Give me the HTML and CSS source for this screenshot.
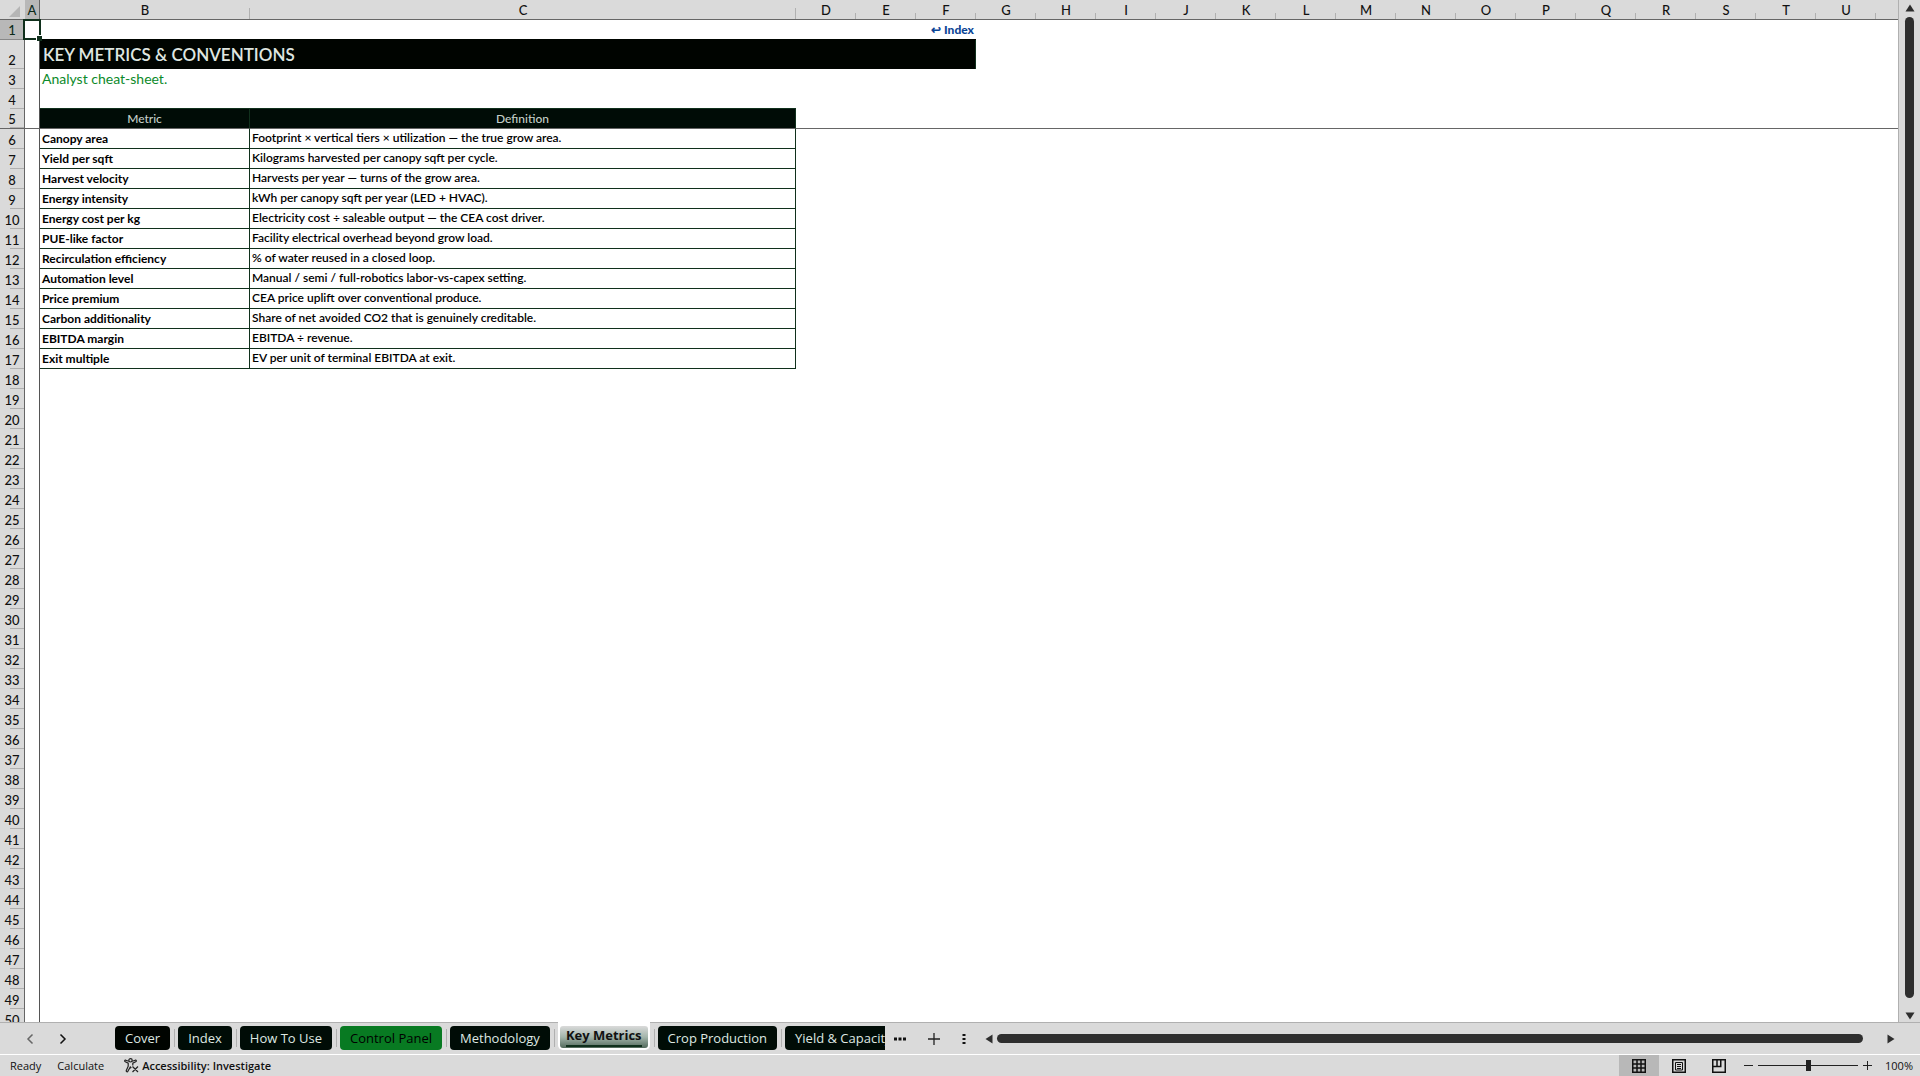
FILE: index.html
```html
<!DOCTYPE html>
<html lang="en">
<head>
<meta charset="utf-8">
<title>Key Metrics</title>
<link rel="stylesheet" href="styles.css">
</head>
<body>
<div class="app">
  <main class="workspace">
    <div class="sheet">
      <table class="grid">
        <colgroup id="cols"><col class="c-row"><col class="c-a"><col class="c-b"><col class="c-c"></colgroup>
        <thead>
          <tr id="letters">
            <th class="corner"><svg width="12" height="12" viewBox="0 0 12 12"><path d="M11 0V11H0Z" fill="#b5b5b5"/></svg></th>
            <th class="current">A</th><th class="wide">B</th><th class="wide">C</th>
          </tr>
        </thead>
        <tbody id="rows">
          <tr><th class="current">1</th><td class="a selected"><span class="cursor"></span></td><td class="above-title"></td><td class="above-title"></td><td class="above-title"></td><td class="above-title"></td><td class="above-title back"><a href="#index">↩ Index</a></td></tr>
          <tr class="title-row"><th>2</th><td class="a"></td><td class="title" colspan="5">KEY METRICS &amp; CONVENTIONS</td></tr>
          <tr><th>3</th><td class="a"></td><td class="note">Analyst cheat-sheet.</td></tr>
          <tr><th>4</th><td class="a"></td><td class="above-head"></td><td class="above-head"></td></tr>
          <tr class="frozen"><th>5</th><td class="a"></td><td class="head">Metric</td><td class="head">Definition</td><td colspan="19"></td></tr>
          <tr><th>6</th><td class="a"></td><td class="metric">Canopy area</td><td class="def">Footprint × vertical tiers × utilization — the true grow area.</td></tr>
          <tr><th>7</th><td class="a"></td><td class="metric">Yield per sqft</td><td class="def">Kilograms harvested per canopy sqft per cycle.</td></tr>
          <tr><th>8</th><td class="a"></td><td class="metric">Harvest velocity</td><td class="def">Harvests per year — turns of the grow area.</td></tr>
          <tr><th>9</th><td class="a"></td><td class="metric">Energy intensity</td><td class="def">kWh per canopy sqft per year (LED + HVAC).</td></tr>
          <tr><th>10</th><td class="a"></td><td class="metric">Energy cost per kg</td><td class="def">Electricity cost ÷ saleable output — the CEA cost driver.</td></tr>
          <tr><th>11</th><td class="a"></td><td class="metric">PUE-like factor</td><td class="def">Facility electrical overhead beyond grow load.</td></tr>
          <tr><th>12</th><td class="a"></td><td class="metric">Recirculation efficiency</td><td class="def">% of water reused in a closed loop.</td></tr>
          <tr><th>13</th><td class="a"></td><td class="metric">Automation level</td><td class="def">Manual / semi / full-robotics labor-vs-capex setting.</td></tr>
          <tr><th>14</th><td class="a"></td><td class="metric">Price premium</td><td class="def">CEA price uplift over conventional produce.</td></tr>
          <tr><th>15</th><td class="a"></td><td class="metric">Carbon additionality</td><td class="def">Share of net avoided CO2 that is genuinely creditable.</td></tr>
          <tr><th>16</th><td class="a"></td><td class="metric">EBITDA margin</td><td class="def">EBITDA ÷ revenue.</td></tr>
          <tr><th>17</th><td class="a"></td><td class="metric">Exit multiple</td><td class="def">EV per unit of terminal EBITDA at exit.</td></tr>
        </tbody>
      </table>
    </div>
    <div class="vscroll">
      <button class="arrow" aria-label="Scroll up"><svg width="10" height="8" viewBox="0 0 10 8"><path d="M5 0.5 9.5 7.5H.5Z"/></svg></button>
      <div class="vthumb"></div>
      <button class="arrow" aria-label="Scroll down"><svg width="10" height="8" viewBox="0 0 10 8"><path d="M.5.5h9L5 7.5Z"/></svg></button>
    </div>
  </main>

  <nav class="tabbar">
    <div class="tabnav">
      <button aria-label="Previous sheet" class="dim"><svg width="8" height="12" viewBox="0 0 8 12"><path d="M6.500 1.500 2 6l4.500 4.500"/></svg></button>
      <button aria-label="Next sheet"><svg width="8" height="12" viewBox="0 0 8 12"><path d="M1.500 1.500 6 6l-4.500 4.500"/></svg></button>
    </div>
    <div class="tabs">
      <button class="tab first">Cover</button>
      <button class="tab">Index</button>
      <button class="tab">How To Use</button>
      <button class="tab green">Control Panel</button>
      <button class="tab">Methodology</button>
      <button class="tab active"><span>Key Metrics</span></button>
      <button class="tab">Crop Production</button>
      <button class="tab last">Yield &amp; Capacity</button>
    </div>
    <div class="tabtools">
      <button aria-label="More sheets"><svg width="12" height="4" viewBox="0 0 12 4"><path d="M0 .5h3v3H0zM4.500.5h3v3h-3zM9 .5h3v3H9z" fill="#111"/></svg></button>
      <button aria-label="New sheet"><svg width="12" height="12" viewBox="0 0 12 12"><path d="M6 0v12M0 6h12" stroke="#222" stroke-width="1.300"/></svg></button>
      <button aria-label="Resize"><svg width="4" height="12" viewBox="0 0 4 12"><path d="M.5 1h3v2h-3zM.5 5h3v2h-3zM.5 9h3v2h-3z" fill="#111"/></svg></button>
    </div>
    <div class="hscroll">
      <button class="arrow" aria-label="Scroll left"><svg width="8" height="10" viewBox="0 0 8 10"><path d="M7.500.5v9L.5 5Z"/></svg></button>
      <div class="hthumb"></div>
      <button class="arrow" aria-label="Scroll right"><svg width="8" height="10" viewBox="0 0 8 10"><path d="M.5.5v9L7.500 5Z"/></svg></button>
    </div>
  </nav>

  <footer class="status">
    <span class="ready">Ready</span>
    <span class="calc">Calculate</span>
    <button class="access"><svg width="15" height="15" viewBox="0 0 15 15" fill="none" stroke="#222" stroke-width="1.200"><circle cx="6.500" cy="2.300" r="1.700"/><path d="M4.800 3.300 1.800 2.200C.6 1.900.3 3.300 1.300 3.800L4.200 5.200V8.200L2.300 12.500C2 13.800 3.400 14.200 3.900 13.200L6.300 9 7.300 10M8.200 3.300l3-1.100c1.200-.3 1.500 1.100.5 1.600L8.800 5.200V7.500M8.500 8.500l5.500 5.500M14 8.500 8.500 14"/></svg>Accessibility: Investigate</button>
    <div class="views">
      <button class="on" aria-label="Normal"><svg width="14" height="14" viewBox="0 0 14 14"><path d="M.75.75h12.500v12.500H.75zM5 .75v12.500M9 .75v12.500M.75 5h12.500M.75 9h12.500"/></svg></button>
      <button aria-label="Page layout"><svg width="14" height="14" viewBox="0 0 14 14"><path d="M.75.75h12.500v12.500H.75z"/><path class="thin" d="M3.500 3.500h7v7.500h-7zM5 5.500h4M5 7.500h4M5 9.500h4"/></svg></button>
      <button aria-label="Page break preview"><svg width="14" height="14" viewBox="0 0 14 14"><path d="M.75.75h12.500v12.500H.75zM.75 7.500h8V.75M5 .75v6.750"/></svg></button>
    </div>
    <div class="zoom">
      <button aria-label="Zoom out"><svg width="9" height="9" viewBox="0 0 9 9"><path d="M0 4.500h9"/></svg></button>
      <input type="range" min="0" max="200" value="100" aria-label="Zoom">
      <button aria-label="Zoom in"><svg width="9" height="9" viewBox="0 0 9 9"><path d="M0 4.500h9M4.500 0v9"/></svg></button>
      <button class="percent">100%</button>
    </div>
  </footer>
</div>
<script src="grid.js"></script>
</body>
</html>
```

FILE: styles.css
```css
* { box-sizing: border-box; }
body { margin: 0; font-family: Lato, "Liberation Sans", sans-serif; color: #000; }
button { border: 0; padding: 0; background: none; font: inherit; color: inherit; }
svg { display: block; }

.app { display: flex; flex-direction: column; height: 100vh; background: #dadada; overflow: hidden; }
.workspace { display: flex; flex: 1; min-height: 0; }
.sheet { flex: 1; min-width: 0; overflow: hidden; background: #fff; border-right: 1px solid #b0b0b0; }

.grid { width: 100%; table-layout: fixed; border-collapse: separate; border-spacing: 0; font-size: 12px; line-height: 18px; }
.c-row { width: 25px; }
.c-a { width: 15px; }
.c-b { width: 210px; }
.c-c { width: 546px; }
.c-std { width: 60px; }
.grid tr { height: 20px; }
.grid .title-row { height: 29px; }
.grid th, .grid td { padding: 0; overflow: hidden; white-space: nowrap; }

.grid th { font-weight: 500; color: #111; }
.grid thead th { height: 20px; padding-top: 2px; font-size: 13px; line-height: 17px; border-bottom: 1px solid #666; background: linear-gradient(#b0b0b0, #b0b0b0) right bottom / 1px 6px no-repeat #dadada; }
.grid thead th.wide { background-size: 1px 11px; }
.grid thead .corner { background: #dadada; }
.corner svg { margin: 2px 0 0 9px; }
.grid tbody th { font-size: 13px; vertical-align: bottom; border-right: 1px solid #666; background: linear-gradient(#b0b0b0, #b0b0b0) right bottom / 14px 1px no-repeat #dadada; }
.grid thead th.current { background: #b8b8b8; border-right: 1px solid #666; color: #0b2a18; }
.grid tbody th.current { background: #b8b8b8; border-bottom: 1px solid #888; color: #0b2a18; }

.a { border-right: 1px solid #555; }
.grid td.selected { position: relative; overflow: visible; }
.cursor { position: absolute; inset: -1px -2px 0 -2px; border: 2px solid #10301c; }
.cursor::after { content: ""; position: absolute; right: -3px; bottom: -3px; width: 5px; height: 5px; background: #10301c; border: solid #fff; border-width: 1px 0 0 1px; }

.above-title { border-bottom: 1px solid #000400; }
.back { text-align: right; font-weight: 900; }
.grid .back { padding-right: 2px; }
.back a { color: #0b4596; text-decoration: none; }
.grid td.title { padding-left: 3px; background: #000400; border-right: 1px solid #10301c; color: #dfe6e0; font-size: 17px; font-weight: 600; line-height: 29px; vertical-align: top; }
.grid td.note { padding-left: 2px; color: #0c8a2a; font-size: 14px; line-height: 20px; overflow: visible; }
.above-head { border-bottom: 1px solid #10301c; }
.frozen td, .frozen th { border-bottom: 1px solid #666; }
.grid .head { background: #000c06; color: #c4cfc8; text-align: center; font-weight: 500; border-right: 1px solid #10301c; }
.grid .metric, .grid .def { padding-left: 2px; border-right: 1px solid #10301c; border-bottom: 1px solid #10301c; }
.metric { font-weight: 700; vertical-align: bottom; }
.def { vertical-align: top; font-weight: 600; }

.vscroll { width: 21px; display: flex; flex-direction: column; align-items: center; gap: 5px; padding: 4px 0 2px; }
.vthumb { flex: 1; width: 9px; border-radius: 5px; background: #2e2e2e; margin-bottom: 9px; }
.arrow { fill: #2e2e2e; }

.tabbar { display: flex; height: 32px; font-family: "Open Sans", "Noto Sans", sans-serif; font-size: 13px; }
.tabnav { width: 115px; display: flex; gap: 25px; align-items: center; padding-left: 26px; border-top: 1px solid #b0b0b0; }
.tabnav path { fill: none; stroke: #111; stroke-width: 1.5; }
.tabnav .dim path { stroke: #666; }
.tabs { display: flex; width: 770px; overflow: hidden; gap: 8px; background: linear-gradient(#b0b0b0, #b0b0b0) top / 100% 1px no-repeat; }
.tab { flex: none; position: relative; height: 24px; margin-top: 4px; padding: 0 10px; border-radius: 4px; background: #000c06; color: #dfe8e2; line-height: 24px; }
.tab.first { background: #000400; }
.tab.green { background: #087a22; color: #000; }
.tab.active { margin: 0; height: 28px; padding: 4px 2px 2px; border-radius: 0 0 5px 5px; background: #fff; color: #111; font-weight: 700; }
.tab.active span { display: block; height: 22px; line-height: 19px; padding: 0 6px; border-radius: 3px; background: linear-gradient(#dadada, #a3b5ab 50%, #52695b); }
.tab.active span::after { content: ""; display: block; height: 2px; background: #10301c; }
.tab:not(.last)::after { content: ""; position: absolute; right: -5px; bottom: 3px; width: 1px; height: 18px; background: #b0b0b0; }
.tabtools { width: 95px; display: flex; align-items: center; gap: 22px; padding: 0 9px; border-top: 1px solid #b0b0b0; }
.hscroll { flex: 1; display: flex; align-items: center; gap: 4px; padding: 0 25px 0 5px; border-top: 1px solid #b0b0b0; }
.hthumb { flex: 1; height: 9px; margin-right: 20px; border-radius: 5px; background: #2e2e2e; }

.status { display: flex; align-items: center; height: 22px; border-top: 1px solid #fff; font-family: "Open Sans", "Noto Sans", sans-serif; font-size: 11px; line-height: 20px; padding: 0 7px 0 10px; color: #111; }
.calc { margin-left: 16px; }
.access { display: flex; align-items: center; gap: 3px; margin-left: 20px; font-weight: 600; }
.views { display: flex; margin-left: auto; }
.views button { width: 40px; height: 21px; display: flex; align-items: center; justify-content: center; }
.views .on { background: #b8b8b8; }
.views path { fill: none; stroke: #111; stroke-width: 1.5; }
.views .thin { stroke-width: 1; }
.zoom { display: flex; align-items: center; gap: 5px; margin-left: 5px; }
.zoom path { stroke: #222; stroke-width: 1; }
.zoom input { appearance: none; width: 100px; height: 12px; margin: 0; background: linear-gradient(#222, #222) center / 100% 1px no-repeat; }
.zoom input::-webkit-slider-thumb { appearance: none; width: 5px; height: 11px; background: #222; }
.percent { margin-left: 8px; }
```

FILE: grid.js
```js
const cols = document.getElementById('cols');
const letters = document.getElementById('letters');
const rows = document.getElementById('rows');
const firstRow = 18, lastRow = 50;

for (const letter of 'DEFGHIJKLMNOPQRSTU') {
  const col = document.createElement('col');
  col.className = 'c-std';
  cols.append(col);
  const th = document.createElement('th');
  th.textContent = letter;
  letters.append(th);
}
cols.append(document.createElement('col'));
const edge = document.createElement('th');
edge.className = 'corner';
letters.append(edge);

for (let n = firstRow; n <= lastRow; n++) {
  const tr = rows.insertRow();
  const th = document.createElement('th');
  th.textContent = n;
  tr.append(th);
  tr.insertCell().className = 'a';
}
```
